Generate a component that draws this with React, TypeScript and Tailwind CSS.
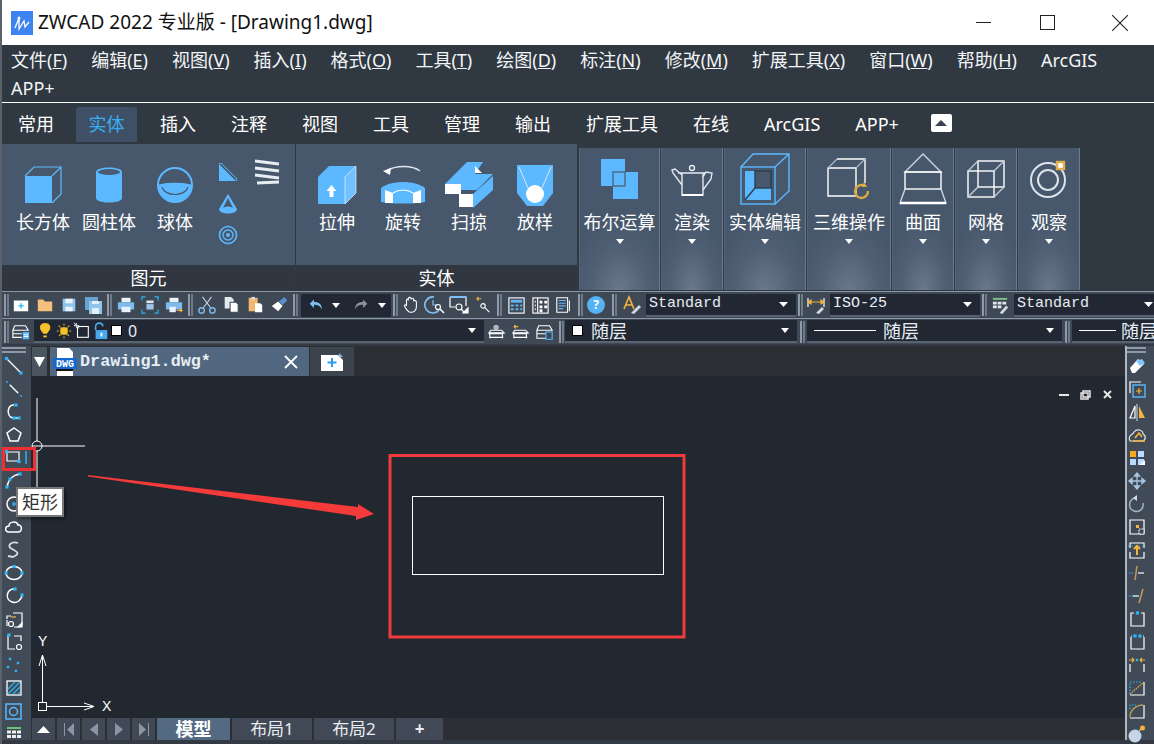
import React from "react";

const CJK = "font-['Noto_Sans','Noto_Sans_CJK_SC',sans-serif]";
const BLUE = "#5cb8ff";
const NODE = "#29b6f6";
const GOLD = "#f5b43c";

const Ic = ({ s = 20, v = 20, children }: { s?: number; v?: number; children: React.ReactNode }) => (
  <svg width={s} height={s} viewBox={`0 0 ${v} ${v}`} fill="none" stroke="#fff" strokeWidth={1.2} className="shrink-0 overflow-visible">
    {children}
  </svg>
);

const N = ({ x, y, r = 1.6 }: { x: number; y: number; r?: number }) => (
  <rect x={x - r} y={y - r} width={r * 2} height={r * 2} fill={NODE} stroke="none" />
);

const Caret = ({ w = 9, h = 5, color = "#fff", up = false }: { w?: number; h?: number; color?: string; up?: boolean }) => (
  <svg width={w} height={h} viewBox="0 0 10 6" className="shrink-0" preserveAspectRatio="none">
    <path d={up ? "M0 6h10L5 0z" : "M0 0h10L5 6z"} fill={color} />
  </svg>
);

const Grip = ({ w = 9 }: { w?: number }) => (
  <div className="flex h-full shrink-0 items-center justify-center gap-[1px]" style={{ width: w }}>
    <div className="h-[22px] w-[2px] bg-[#8e9aa9]" />
    <div className="h-[22px] w-[2px] bg-[#6f7a88]" />
  </div>
);

const Slot = ({ children }: { children: React.ReactNode }) => (
  <div className="flex h-full w-6 shrink-0 items-center justify-center">{children}</div>
);

const Combo = ({ className, children }: { className: string; children: React.ReactNode }) => (
  <div className={`flex h-[23px] shrink-0 items-center border-b-2 border-[#59636f] bg-[#212833] text-[#e8eef5] ${className}`}>
    {children}
  </div>
);

// ---- ribbon icons ----
const BoxIcon = () => (
  <svg width="38" height="38" viewBox="0 0 38 38" fill="none">
    <rect x="1" y="10" width="27" height="27" fill={BLUE} />
    <path d="M1 10 10 1h27v27l-9 9M28 10l9-9" stroke={BLUE} strokeWidth="1.2" />
  </svg>
);
const CylinderIcon = () => (
  <svg width="28" height="38" viewBox="0 0 28 38">
    <path d="M1 6c0-6 26-6 26 0v26c0 6-26 6-26 0z" fill={BLUE} />
    <ellipse cx="14" cy="6" rx="11" ry="3" fill="#4a5a70" />
  </svg>
);
const SphereIcon = () => (
  <svg width="38" height="38" viewBox="0 0 38 38" fill="none">
    <circle cx="19" cy="19" r="17" stroke={BLUE} strokeWidth="2" />
    <path d="M2 19c6-3 28-3 34 0-1 10-9 17-17 17S3 29 2 19z" fill={BLUE} />
    <path d="M6 21c3 10 23 10 26 0" stroke="#48586c" strokeWidth="1.2" />
  </svg>
);
const WedgeIcon = () => (
  <svg width="20" height="20" viewBox="0 0 20 20" fill="none">
    <path d="M1 1v17h17z" fill={BLUE} />
    <path d="M1 1 3 0l16 16-1 2" stroke={BLUE} />
  </svg>
);
const ConeIcon = () => (
  <svg width="20" height="22" viewBox="0 0 20 22" fill="none">
    <path d="M10 1 1 16c0 6 18 6 18 0z" fill={BLUE} />
    <path d="M10 5 5 15c3-2 7-2 10 0z" fill="#48586c" />
  </svg>
);
const TorusIcon = () => (
  <svg width="20" height="20" viewBox="0 0 20 20" fill="none" stroke={BLUE}>
    <circle cx="10" cy="10" r="8.5" strokeWidth="1.6" />
    <circle cx="10" cy="10" r="5" strokeWidth="1.4" />
    <circle cx="10" cy="10" r="2" fill={BLUE} stroke="none" />
  </svg>
);
const CoilIcon = () => (
  <svg width="26" height="26" viewBox="0 0 26 26" fill="none" stroke="#e8edf2" strokeWidth="3">
    <path d="M1 2l24 3M1 9l24 3M1 16l24 3M3 24l22-1" />
  </svg>
);
const ExtrudeIcon = () => (
  <svg width="40" height="40" viewBox="0 0 40 40">
    <path d="M1 12 12 1h27L28 12z" fill={BLUE} />
    <rect x="1" y="12" width="27" height="27" fill={BLUE} />
    <path d="M28 12 39 1v27L28 39z" fill="#6fc2ff" stroke="#fff" strokeWidth="0.6" />
    <path d="M14.500 20l5 6h-3v6h-4v-6h-3z" fill="#fff" />
  </svg>
);
const RevolveIcon = () => (
  <svg width="46" height="42" viewBox="0 0 46 42" fill="none">
    <path d="M6 7c10-6 26-6 34 0" stroke="#dfe6ee" strokeWidth="1.4" />
    <path d="M3 7l8-3-1 7z" fill="#fff" />
    <path d="M1 24c10-8 34-8 44 0v14c-12 2-32 2-44 0z" fill={BLUE} />
    <path d="M5 26l8 3v10H5zM41 26l-8 3v10h8z" fill="#fff" />
    <path d="M13 29c6-4 14-4 20 0" stroke="#fff" strokeWidth="1.2" />
  </svg>
);
const SweepIcon = () => (
  <svg width="48" height="46" viewBox="0 0 48 46">
    <path d="M0 22 22 0h16L30 12h18L32 28H16l-4 4H0z" fill={BLUE} />
    <path d="M30 4v7h7z" fill="#fff" />
    <path d="M0 22h16v10H0zM14 32h14v13H14z" fill="#fff" />
    <path d="M28 32 48 14v14L28 46z" fill={BLUE} />
  </svg>
);
const LoftIcon = () => (
  <svg width="36" height="42" viewBox="0 0 36 42" fill="none">
    <path d="M0 1h36v28L26 42H10L0 29z" fill={BLUE} />
    <circle cx="18" cy="30" r="9" fill="#fff" />
    <path d="M2 3 11 24M34 3 25 24" stroke="#dce6f0" strokeWidth="1" />
  </svg>
);
const BooleanIcon = () => (
  <svg width="37" height="40" viewBox="0 0 37 40">
    <rect x="0" y="0" width="24" height="27" fill={BLUE} />
    <rect x="12" y="13" width="25" height="27" fill={BLUE} />
    <rect x="12" y="13" width="12" height="14" fill={BLUE} stroke="#48586c" strokeWidth="1.2" />
  </svg>
);
const TeapotIcon = () => (
  <svg width="44" height="36" viewBox="0 0 44 36" fill="none" stroke="#e4e9ef" strokeWidth="1.4">
    <path d="M8 12h27M12 12v22h21V12M12 14 5 8 2 9l1 3 9 12M33 16l3-5 6 1-1 6-8 11" />
    <circle cx="22" cy="7" r="2.500" />
    <path d="M12 34h21" strokeWidth="2" stroke="#fff" />
  </svg>
);
const SolidEditIcon = () => (
  <svg width="50" height="52" viewBox="0 0 50 52" fill="none" stroke={BLUE} strokeWidth="1.4">
    <rect x="1" y="14" width="34" height="37" />
    <path d="M1 14 13 1h36v37L35 51M35 14 49 1" />
    <rect x="5" y="18" width="26" height="29" fill={BLUE} stroke="none" />
    <rect x="15" y="18" width="16" height="17" fill="#48586c" stroke="#2b3d52" />
    <path d="M5 47 15 35" stroke="#2b3d52" />
  </svg>
);
const Op3dIcon = () => (
  <svg width="44" height="42" viewBox="0 0 44 42" fill="none" stroke="#fff" strokeWidth="1.4">
    <path d="M1 10h28v28H1zM29 10V9M10 1h28v24" />
    <path d="M1 10l9-9M29 10l9-9" stroke="#aab4c0" />
    <path d="M41 33a6.500 6.500 0 1 1-3-5" stroke="#d9a944" strokeWidth="2.400" />
    <path d="M37 24l3 5-5 0z" fill="#d9a944" stroke="none" />
  </svg>
);
const SurfaceIcon = () => (
  <svg width="48" height="52" viewBox="0 0 48 52" fill="none" stroke="#fff" strokeWidth="1.4">
    <path d="M24 1 6 19h36z" stroke="#d0d7df" />
    <rect x="6" y="19" width="36" height="17" />
    <path d="M6 36 1 50h46l-5-14" stroke="#d0d7df" />
    <path d="M1 50h46" strokeWidth="2.400" />
  </svg>
);
const MeshIcon = () => (
  <svg width="38" height="38" viewBox="0 0 38 38" fill="none" stroke="#fff" strokeWidth="1.4">
    <rect x="1" y="11" width="26" height="26" />
    <rect x="11" y="1" width="26" height="26" />
    <path d="M1 11 11 1M27 11 37 1M27 37l10-10" stroke="#c5ccd5" />
    <path d="M1 37l10-10" stroke="#c5ccd5" />
  </svg>
);
const OrbitIcon = () => (
  <svg width="38" height="40" viewBox="0 0 38 40" fill="none" stroke="#dde3ea">
    <circle cx="18" cy="21" r="17" strokeWidth="2" />
    <circle cx="18" cy="21" r="10" strokeWidth="2" />
    <rect x="27" y="3" width="7" height="7" fill="#fff" stroke="#e0b050" strokeWidth="2.400" />
  </svg>
);

// ---- sidebar icons ----
const leftIcons: React.ReactNode[] = [
  <><path d="M3 3l14 14" /><N x={2.500} y={2.500} /><N x={17} y={17} /></>,
  <><path d="M2 2l16 16" strokeDasharray="2.500 2.500" stroke={NODE} /><path d="M6 6l8 8" /></>,
  <><path d="M10 3C3 2 2 15 9 16h5" strokeWidth="1.500" /><N x={12} y={3} /><N x={10} y={16} /><N x={15} y={16} /></>,
  <path d="M10 3l7 5-3 8H6L3 8z" strokeWidth="1.500" />,
  <><path d="M4 4h11v9H3V5" /><N x={2.500} y={3.500} /><N x={15} y={13.500} /><path d="M22 3v13" stroke={NODE} strokeWidth="1.500" /></>,
  <><path d="M3 16C4 9 9 4 16 3" strokeWidth="1.500" /><N x={3} y={16} /><N x={6} y={8} /><N x={16} y={3} /></>,
  <><circle cx="10" cy="10" r="7" strokeWidth="1.500" /><N x={10} y={10} /></>,
  <path d="M5 15c-5 0-4-6 0-6 0-5 8-5 9-1 4-1 5 7 0 7z" strokeWidth="1.500" />,
  <path d="M14 3C7 1 2 6 8 9s8 5 1 8l-5-1" strokeWidth="1.800" stroke="#d7dee6" />,
  <><ellipse cx="10" cy="10" rx="8" ry="6.500" strokeWidth="1.500" /><N x={10} y={3.500} /><N x={2} y={10} /><N x={18} y={10} /></>,
  <><path d="M11 3C3 2 0 13 8 16c5 2 9-2 10-6" strokeWidth="1.500" /><N x={11} y={3} /><N x={18} y={9} /></>,
  <><path d="M9 4h9v12l-3 2H10M3 10V7h4M3 11v6" /><path d="M7 8h5" stroke={GOLD} /><circle cx="7" cy="15" r="2.500" /><path d="M14 18l4-4v4z" fill="#fff" /></>,
  <><path d="M10 4h7v5M4 3v14h7" /><N x={5} y={3} /><circle cx="15" cy="15" r="2.500" /></>,
  <><N x={6} y={4} r={1.200} /><N x={14} y={8} r={1.200} /><N x={4} y={12} r={1.200} /><N x={12} y={16} r={1.200} /></>,
  <><rect x="3" y="3" width="14" height="14" strokeWidth="1.300" /><path d="M4 11l7-7M4 16l12-12M9 16l7-7M14 16l2-2" stroke={NODE} /></>,
  <><rect x="2" y="3" width="15" height="15" stroke={BLUE} strokeWidth="1.500" /><circle cx="9.500" cy="10.500" r="4" stroke={BLUE} strokeWidth="1.500" /></>,
  <><path d="M3 3h14v2H3z" fill="#6cbf7b" stroke="none" /><path d="M3 6.500h4v3H3zM8 6.500h4v3H8zM13 6.500h4v3h-4zM3 11h4v3H3zM8 11h4v3H8zM13 11h4v3h-4z" fill="#eee" stroke="none" /></>,
];

const rightIcons: React.ReactNode[] = [
  <><path d="M3 12l8-9 6 5-9 9H5z" fill="#fff" stroke="none" /><path d="M9 5l6-2 3 4-5 3z" fill="#7ec8ff" stroke="none" /></>,
  <><path d="M3 14V3h11" /><rect x="6" y="6" width="12" height="12" stroke={BLUE} strokeWidth="1.400" /><path d="M12 9v6M9 12h6" stroke={GOLD} /></>,
  <><path d="M10 2v17" stroke="#bcc6d2" /><path d="M8 4 3 16h5z" /><path d="M12 4l6 12h-6z" fill={GOLD} stroke="none" /></>,
  <><path d="M3 16c-3-6 3-6 4-9 3-4 9-2 9 2 4 2 2 7-1 7z" stroke="#dfe5ec" /><path d="M6 16h12M8 13l4-5 3 4" stroke={GOLD} strokeWidth="1.600" /></>,
  <><rect x="3" y="3" width="6" height="6" fill="#f7a81b" stroke="none" /><rect x="11" y="3" width="6" height="6" fill="#b8dcff" stroke="none" /><rect x="3" y="11" width="6" height="6" fill="#b8dcff" stroke="none" /><rect x="11" y="11" width="6" height="6" fill="#b8dcff" stroke="none" /><path d="M13 17l5-5v5z" fill="#fff" stroke="none" /></>,
  <path d="M10 2v16M2 10h16M10 2 7.500 5h5zM10 18l-2.500-3h5zM2 10l3-2.500v5zM18 10l-3-2.500v5z" stroke="#a9c6e2" strokeWidth="1.300" />,
  <><path d="M8 4C1 6 1 15 7 17c6 2 10-3 9-8" stroke="#9fb2c6" strokeWidth="1.500" /><path d="M10 1 6 4l4 3z" fill="#d4dde7" stroke="none" /></>,
  <><path d="M3 3h14v14H3z" /><rect x="9" y="8" width="3" height="3" fill={GOLD} stroke="none" /><rect x="12" y="12" width="5" height="5" fill="#3f4955" stroke="#fff" strokeDasharray="1.500 1" /></>,
  <><path d="M3 8V3h14v5M3 12v6h14v-6" /><path d="M1 6h18" stroke={NODE} strokeDasharray="1.500 2" /><path d="M10 15V7M7 9l3-3 3 3" stroke={GOLD} strokeWidth="2" /></>,
  <><path d="M2 10h5" stroke={NODE} strokeDasharray="1.500 1" /><path d="M11 10h6" /><path d="M10 3 8 17" stroke="#b89a55" strokeWidth="1.600" /></>,
  <><path d="M2 10h4" stroke={NODE} strokeDasharray="1.500 1" /><path d="M6 10h6" /><path d="M16 3l-4 14" stroke="#b89a55" strokeWidth="1.600" /></>,
  <><path d="M7 4H4v13h13V4h-3" /><N x={10.500} y={4} /></>,
  <><path d="M4 5v12h13V5" /><path d="M4 4h1M16 4h1" /><N x={8} y={4} /><N x={13} y={4} /></>,
  <><path d="M3 9v8M17 9v8" /><path d="M2 5h5M7 5 5 3M7 5 5 7M18 5h-5M13 5l2-2M13 5l2 2" stroke={GOLD} /><N x={10} y={5} r={1.200} /></>,
  <><path d="M3 17h14V4" /><path d="M3 16 17 4" stroke={GOLD} strokeDasharray="1.500 1" /><path d="M3 16V4h11" stroke={NODE} strokeDasharray="1.500 1.500" /></>,
  <><path d="M3 17h14V4" /><path d="M3 16C3 9 9 4 16 4" stroke="#b89a55" strokeWidth="1.400" /><path d="M3 8V4h6" stroke={NODE} strokeDasharray="1.500 1.500" /></>,
  <><circle cx="8" cy="12" r="6.500" fill="#c5d4e6" stroke="none" /><path d="M12 7l2-2" stroke="#bbb" /><circle cx="15.500" cy="4" r="2.500" fill={GOLD} stroke="none" /></>,
];

const Sidebar = ({ icons, className }: { icons: React.ReactNode[]; className: string }) => (
  <div className={`flex h-full w-[29px] shrink-0 flex-col bg-[#414b57] ${className}`}>
    <div className="mt-[1px] mb-[3px] flex w-full flex-col gap-[2px]">
      <div className="h-[2px] bg-[#8e9aa9]" />
      <div className="h-[2px] bg-[#8e9aa9]" />
    </div>
    <div className="flex flex-col items-center gap-[3px]">
      {icons.map((icon, i) => (
        <Ic key={i}>{icon}</Ic>
      ))}
    </div>
  </div>
);

const menu: [string, string, string][] = [
  ["文件(", "F", ")"],
  ["编辑(", "E", ")"],
  ["视图(", "V", ")"],
  ["插入(", "I", ")"],
  ["格式(", "O", ")"],
  ["工具(", "T", ")"],
  ["绘图(", "D", ")"],
  ["标注(", "N", ")"],
  ["修改(", "M", ")"],
  ["扩展工具(", "X", ")"],
  ["窗口(", "W", ")"],
  ["帮助(", "H", ")"],
];

const tabs = ["插入", "注释", "视图", "工具", "管理", "输出", "扩展工具", "在线", "ArcGIS", "APP+"];

const RibbonBtn = ({ label, children }: { label: string; children: React.ReactNode }) => (
  <div className="flex w-[66px] shrink-0 flex-col items-center">
    <div className="flex h-[46px] items-center">{children}</div>
    <div className="mt-[1px] whitespace-nowrap text-[18px] leading-[26px] text-white">{label}</div>
  </div>
);

const DropPanel = ({ w, label, children }: { w: number; label: string; children: React.ReactNode }) => (
  <div
    className="mr-[1px] flex h-[142px] shrink-0 flex-col items-center bg-[radial-gradient(ellipse_60%_50%_at_50%_100%,#6b788a_0%,#505f73_60%,#48586c_100%)] pt-[4px] shadow-[inset_1px_0_0_#55647a,inset_-1px_0_0_#6d7b8f]"
    style={{ width: w }}
  >
    <div className="flex h-[54px] items-center">{children}</div>
    <div className="mt-[3px] whitespace-nowrap text-[18px] leading-[26px] text-white">{label}</div>
    <div className="mt-[4px]">
      <Caret w={8} h={5} />
    </div>
  </div>
);

export default function App() {
  return (
    <div className={`relative flex h-[744px] w-[1154px] flex-col overflow-hidden border-l-2 border-[#59616b] bg-[#333a44] ${CJK}`}>
      {/* title bar */}
      <div className="flex h-[45px] shrink-0 items-center bg-white pl-[9px] text-[#111]">
        <svg width="22" height="24" viewBox="0 0 22 24" className="shrink-0">
          <rect width="22" height="24" fill="#3d84f0" />
          <path d="M4 17 8 7v11l5-8 1 6 4-5" fill="none" stroke="#fff" strokeWidth="1.300" />
          <circle cx="8" cy="7" r="1.500" fill="#fff" />
        </svg>
        <span className="ml-[5px] text-[19px] leading-none">ZWCAD 2022 专业版 - [Drawing1.dwg]</span>
        <div className="ml-auto flex items-center pr-[26px]">
          <div className="h-[1px] w-[15px] bg-[#222]" />
          <div className="ml-[49px] h-[15px] w-[15px] border border-[#222]" />
          <svg width="16" height="16" viewBox="0 0 16 16" className="ml-[57px]" stroke="#222" strokeWidth="1.100">
            <path d="M0 0l16 16M16 0 0 16" />
          </svg>
        </div>
      </div>

      {/* menu bar */}
      <div className="flex h-[58px] shrink-0 flex-wrap content-start gap-x-[24px] border-b border-white bg-[#303841] pl-[9px] pr-[4px] pt-[1px] text-[18px] leading-[28px] text-[#f2f5f8]">
        {menu.map(([a, k, b]) => (
          <span key={a} className="whitespace-nowrap">
            {a}
            <span className="underline">{k}</span>
            {b}
          </span>
        ))}
        <span>ArcGIS</span>
        <span className="w-full">APP+</span>
      </div>

      {/* ribbon tabs */}
      <div className="flex h-[41px] shrink-0 items-center bg-[#303841] pl-[16px] pt-[1px] text-[18px] text-white">
        <span>常用</span>
        <div className="ml-[22px] flex h-[35px] w-[61px] items-center justify-center rounded-t-[3px] bg-[#3f5066] text-[#38aef0]">实体</div>
        <div className="ml-[23px] flex items-center gap-x-[35px]">
          {tabs.map((t) => (
            <span key={t}>{t}</span>
          ))}
          <div className="-ml-[3px] -mt-[3px] flex h-[18px] w-[21px] items-center justify-center rounded-[2px] bg-white">
            <Caret w={12} h={6} color="#39424e" up />
          </div>
        </div>
      </div>

      {/* ribbon panels */}
      <div className="flex h-[147px] shrink-0 items-start bg-[#303841]">
        <div className="mr-[1px] flex h-[146px] w-[293px] shrink-0 flex-col bg-[#48586c]">
          <div className="flex flex-1 pl-[8px] pt-[18px]">
            <RibbonBtn label="长方体"><BoxIcon /></RibbonBtn>
            <RibbonBtn label="圆柱体"><CylinderIcon /></RibbonBtn>
            <RibbonBtn label="球体"><SphereIcon /></RibbonBtn>
            <div className="ml-[10px] flex w-[20px] flex-col items-center gap-[10px] pt-[1px]">
              <WedgeIcon />
              <ConeIcon />
              <TorusIcon />
            </div>
            <div className="ml-[16px] -mt-[3px]">
              <CoilIcon />
            </div>
          </div>
          <div className="h-[25px] bg-[#303741] text-center text-[18px] leading-[26px] text-white">图元</div>
        </div>
        <div className="mr-[1px] flex h-[146px] w-[281px] shrink-0 flex-col bg-[#48586c]">
          <div className="flex flex-1 pl-[8px] pt-[18px]">
            <RibbonBtn label="拉伸"><ExtrudeIcon /></RibbonBtn>
            <RibbonBtn label="旋转"><RevolveIcon /></RibbonBtn>
            <RibbonBtn label="扫掠"><SweepIcon /></RibbonBtn>
            <RibbonBtn label="放样"><LoftIcon /></RibbonBtn>
          </div>
          <div className="h-[25px] bg-[#303741] text-center text-[18px] leading-[26px] text-white">实体</div>
        </div>
        <div className="mt-[4px] flex pl-[1px]">
          <DropPanel w={81} label="布尔运算"><BooleanIcon /></DropPanel>
          <DropPanel w={62} label="渲染"><TeapotIcon /></DropPanel>
          <DropPanel w={82} label="实体编辑"><SolidEditIcon /></DropPanel>
          <DropPanel w={84} label="三维操作"><Op3dIcon /></DropPanel>
          <DropPanel w={62} label="曲面"><SurfaceIcon /></DropPanel>
          <DropPanel w={62} label="网格"><MeshIcon /></DropPanel>
          <DropPanel w={62} label="观察"><OrbitIcon /></DropPanel>
        </div>
      </div>

      {/* standard toolbar */}
      <div className="flex h-[27px] shrink-0 items-center border-t border-[#8b97a6] bg-[#3f4955] pl-[1px]">
        <Grip w={6} />
        <Slot><Ic s={18}><path d="M2 5h16v12H2z" fill="#fff" stroke="none" /><path d="M10 8v6M7 11h6" stroke={NODE} strokeWidth="1.500" /></Ic></Slot>
        <Slot><Ic s={18}><path d="M2 4h6l2 2h8v11H2z" fill="#f6bf7b" stroke="none" /></Ic></Slot>
        <Slot><Ic s={18}><path d="M3 3h14v14H3z" fill="#90c6ee" stroke="none" /><path d="M6 3h8v5H6zM6 12h8v5H6z" fill="#eaf3fb" stroke="none" /></Ic></Slot>
        <Slot><Ic s={20}><path d="M2 2h13v13H2z" fill="#6aa3cf" stroke="none" /><path d="M6 6h13v13H6z" fill="#90c6ee" stroke="none" /><path d="M9 13h7v6H9zM9 6h7v3H9z" fill="#e4eef7" stroke="none" /></Ic></Slot>
        <Grip w={9} />
        <Slot><Ic s={18}><path d="M5 2h10v5H5z" fill="#e8f2fb" stroke="none" /><path d="M1 7h18v8H1z" fill="#7dbcec" stroke="none" /><path d="M5 12h10v6H5z" fill="#e8f2fb" stroke="none" /></Ic></Slot>
        <Slot><Ic s={18}><path d="M1 5V1h4M15 1h4v4M19 15v4h-4M5 19H1v-4" stroke={NODE} /><path d="M6 5h8v3H6z" fill="#d9e6f2" stroke="none" /><path d="M6 9h8v6H6z" fill="#9fc6e6" stroke="none" /></Ic></Slot>
        <Slot><Ic s={18}><path d="M5 2h10v5H5z" fill="#e8f2fb" stroke="none" /><path d="M1 7h18v8H1z" fill="#7dbcec" stroke="none" /><path d="M5 12h7v6H5z" fill="#e8f2fb" stroke="none" /><path d="M13 16h6M17 14l2 2-2 2" stroke={GOLD} /></Ic></Slot>
        <Grip w={9} />
        <Slot><Ic s={18}><path d="M5 1l9 12M15 1 6 13" stroke="#c8d4e0" /><circle cx="4" cy="16" r="3" stroke="#7dbcec" strokeWidth="1.500" /><circle cx="16" cy="16" r="3" stroke="#7dbcec" strokeWidth="1.500" /></Ic></Slot>
        <Slot><Ic s={18}><path d="M3 1h7l3 3v10H3z" fill="#e4e9ef" stroke="none" /><path d="M9 7h7l2 2v9H9z" fill="#fff" stroke="#3f4955" /></Ic></Slot>
        <Slot><Ic s={18}><path d="M3 2h10v15H3z" fill="#f2b66e" stroke="none" /><path d="M6 1h4v3H6z" fill="#d7dce2" stroke="none" /><path d="M10 8h6l2 2v8h-8z" fill="#fff" stroke="none" /></Ic></Slot>
        <Slot><Ic s={18}><path d="M9 6l5 5-5 6-7-6z" fill="#fff" stroke="none" /><path d="M10 6l6-5 3 4-5 5z" fill="#5d8fd0" stroke="none" /></Ic></Slot>
        <Grip w={9} />
        <div className="ml-[1px] flex h-[23px] w-[90px] shrink-0 items-center bg-[#212833] pl-[7px]">
          <Ic s={17}><path d="M7 3 2 8l5 5V9c4 0 8 1 9 6 1-6-3-9-9-9z" fill="#7ec0f5" stroke="none" /></Ic>
          <div className="ml-[7px]"><Caret w={8} h={5} /></div>
          <div className="ml-[12px]"><Ic s={17}><path d="M13 3l5 5-5 5V9c-4 0-8 1-9 6-1-6 3-9 9-9z" fill="#8b929b" stroke="none" /></Ic></div>
          <div className="ml-[9px]"><Caret w={8} h={5} /></div>
        </div>
        <Grip w={8} />
        <Slot><Ic s={18}><path d="M5 9V5c0-2 2-2 2 0V3c0-2 3-2 3 0v1c0-2 3-2 3 0v2c0-2 3-1 3 1v5c0 3-2 6-5 6H9c-2 0-3-2-6-6-1-2 1-3 2-1z" strokeWidth="1.200" /></Ic></Slot>
        <Slot><Ic s={20}><path d="M9 2a8 8 0 1 0 5 13" stroke="#7ec0f5" strokeWidth="1.600" /><path d="M8 5v5h4" stroke="#7ec0f5" /><circle cx="13" cy="12" r="2.500" /><path d="M15 14l4 4" strokeWidth="1.600" /></Ic></Slot>
        <Slot><Ic s={20}><path d="M1 2h16v9M1 2v10h5" /><path d="M1 2h16" stroke="#7ec0f5" strokeWidth="2" /><circle cx="10" cy="12" r="3" /><path d="M12 14l3 3" /><path d="M14 18l5-5v5z" fill="#fff" /></Ic></Slot>
        <Slot><Ic s={18}><path d="M3 3h5M3 3l2-2M3 3l2 2" stroke={GOLD} /><circle cx="10" cy="11" r="2.500" /><path d="M12 13l5 5" /></Ic></Slot>
        <Grip w={9} />
        <Slot><Ic s={19}><rect x="2" y="2" width="16" height="16" /><path d="M4 4h12v3H4z" fill="#62b6f2" stroke="none" /><path d="M4 9h3v2H4zM9 9h3v2H9zM14 9h2v2h-2zM4 13h3v2H4zM9 13h3v2H9zM14 13h2v2h-2z" fill="#62b6f2" stroke="none" /></Ic></Slot>
        <Slot><Ic s={19}><rect x="2" y="2" width="16" height="16" /><path d="M7 2v16" /><path d="M4 5h1v2H4zM4 9h1v2H4zM4 13h1v2H4zM9 5h3v3H9zM14 5h3v3h-3zM9 10h3v3H9zM14 10h3v3h-3zM9 14h3v3H9z" fill="#fff" stroke="none" /></Ic></Slot>
        <Slot><Ic s={18}><path d="M2 2h12v16H2z" /><path d="M4 5h8M4 8h8M4 11h8M4 14h5" stroke="#62b6f2" /><path d="M16 5v12" /></Ic></Slot>
        <Grip w={8} />
        <Slot>
          <div className="flex h-[18px] w-[18px] items-center justify-center rounded-full bg-[#55b2f3] text-[12px] font-bold leading-none text-white">?</div>
        </Slot>
        <Grip w={12} />
        <Slot><Ic s={20}><path d="M2 14 7 2l5 12M4 10h6" stroke={GOLD} strokeWidth="1.600" /><path d="M9 18l8-8 2 2-7 7z" fill="#cfd9e4" stroke="none" /></Ic></Slot>
        <Combo className="ml-[2px] w-[150px] pl-[3px] pr-[8px] font-['Liberation_Mono',monospace] text-[15px]">
          <span className="pt-[1px]">Standard</span>
          <span className="ml-auto"><Caret w={9} h={5} /></span>
        </Combo>
        <Grip w={8} />
        <Slot><Ic s={20}><path d="M2 3v9M18 3v9" /><path d="M2 7h16M2 7l3-2v4zM18 7l-3-2v4z" stroke={GOLD} /><path d="M10 18l6-6 2 2-5 5z" fill="#cfd9e4" stroke="none" /></Ic></Slot>
        <Combo className="ml-[2px] w-[150px] pl-[3px] pr-[8px] font-['Liberation_Mono',monospace] text-[15px]">
          <span className="pt-[1px]">ISO-25</span>
          <span className="ml-auto"><Caret w={9} h={5} /></span>
        </Combo>
        <Grip w={8} />
        <Slot><Ic s={19}><path d="M2 2h15v2H2z" fill="#7bc58a" stroke="none" /><path d="M2 6h4v3H2zM7 6h4v3H7zM12 6h4v3h-4zM2 10h4v3H2zM7 10h4v3H7z" fill="#dfe5ea" stroke="none" /><path d="M9 18l7-8 2 2-6 7z" fill="#cfd9e4" stroke="none" /></Ic></Slot>
        <Combo className="ml-[2px] w-[160px] pl-[3px] font-['Liberation_Mono',monospace] text-[15px]">
          <span className="pt-[1px]">Standard</span>
          <span className="ml-[55px]"><Caret w={9} h={5} /></span>
        </Combo>
      </div>

      {/* layer toolbar */}
      <div className="flex h-[26px] shrink-0 items-center border-t border-[#8b97a6] bg-[#3f4955] pl-[1px]">
        <Grip w={6} />
        <Slot><Ic s={18}><path d="M3 3h12l3 5H1zM1 8v4h10M1 12v4h10" /><path d="M12 10h7v8h-7z" fill={BLUE} stroke="none" /><path d="M13 13h5M13 15h5" stroke="#fff" /></Ic></Slot>
        <Combo className="ml-[1px] w-[450px] pl-[3px] pr-[8px] text-[15px]">
          <Ic s={18}><path d="M9 1c5 0 7 4 5 8l-3 4H7L4 9C2 5 4 1 9 1z" fill="#f6c02c" stroke="none" /><path d="M7 15h4v2H7z" fill="#f6c02c" stroke="none" /></Ic>
          <Ic s={18}><rect x="6" y="6" width="8" height="8" fill="#f6c02c" stroke="none" /><path d="M10 2v16M2 10h16M4 4l12 12M16 4 4 16" stroke="#f6c02c" strokeDasharray="2 1.500" /></Ic>
          <Ic s={18}><rect x="5" y="5" width="12" height="12" /><path d="M1 1l6 6M4 1v6M1 4h6" stroke="#c5ccd5" /></Ic>
          <div className="ml-[1px]"><Ic s={18}><path d="M4 9V5c0-5 8-5 8 0" stroke="#4aa8f0" strokeWidth="1.800" /><rect x="4" y="9" width="13" height="10" fill="#4aa8f0" stroke="none" /><path d="M10.500 12v4" stroke="#fff" strokeWidth="2" /></Ic></div>
          <div className="ml-[1px] h-[11px] w-[11px] border border-black bg-white" />
          <span className="ml-[6px] text-[16px]">0</span>
          <span className="ml-auto"><Caret w={8} h={5} /></span>
        </Combo>
        <div className="ml-[1px]" />
        <Slot><Ic s={18}><path d="M3 8h12l3 3H1zM1 12h16M2 16h15M2 11v6M16 11v6" /><circle cx="9" cy="5" r="3" fill="#aeb7c2" stroke="none" /></Ic></Slot>
        <Slot><Ic s={18}><path d="M3 8h12l3 3H1zM1 12h16M2 16h15M2 11v6M16 11v6" /><path d="M2 4h5M2 4l2-2M2 4l2 2" stroke={GOLD} /></Ic></Slot>
        <Slot><Ic s={18}><path d="M3 3h12l3 5H1zM1 8v9h10M1 12h10" /><path d="M11 10h7v8h-7z" stroke={BLUE} /></Ic></Slot>
        <Grip w={8} />
        <Combo className="w-[232px] pl-[7px] pr-[8px] text-[18px]">
          <div className="h-[11px] w-[11px] border border-black bg-white" />
          <span className="ml-[8px] leading-none">随层</span>
          <span className="ml-auto"><Caret w={8} h={5} /></span>
        </Combo>
        <Grip w={10} />
        <Combo className="w-[255px] pl-[7px] pr-[8px] text-[18px]">
          <div className="h-[1px] w-[62px] bg-white" />
          <span className="ml-[7px] leading-none">随层</span>
          <span className="ml-auto"><Caret w={8} h={5} /></span>
        </Combo>
        <Grip w={10} />
        <Combo className="w-[90px] overflow-hidden pl-[7px] text-[18px]">
          <div className="h-[1px] w-[37px] shrink-0 bg-white" />
          <span className="ml-[5px] whitespace-nowrap leading-none">随层</span>
        </Combo>
      </div>

      <div className="h-[2px] shrink-0" />

      {/* workspace */}
      <div className="flex h-[394px] shrink-0 bg-[#2b2e32]">
        <Sidebar icons={leftIcons} className="pr-[5px]" />
        <div className="flex min-w-0 flex-1 flex-col">
          <div className="flex h-[30px] shrink-0 items-stretch pl-[1px] pt-[1px]">
            <div className="flex w-[15px] items-center justify-center bg-[#4a5560]">
              <Caret w={11} h={10} />
            </div>
            <div className="ml-[3px] flex w-[259px] items-center bg-[#51677f] pl-[3px] pr-[11px] text-white">
              <svg width="24" height="28" viewBox="0 0 24 28" className="shrink-0">
                <path d="M4 0h12l4 4v24H4z" fill="#fff" />
                <rect x="0" y="10" width="24" height="11" fill="#1668d0" />
                <rect x="3" y="21" width="17" height="2" fill="#111" />
                <text x="12" y="19" fontSize="10" textAnchor="middle" fill="#fff" fontFamily="Liberation Mono" fontWeight="700">DWG</text>
              </svg>
              <span className="ml-[3px] mt-[2px] font-['Liberation_Mono',monospace] text-[16.8px] font-bold leading-none text-[#e6edf4]">Drawing1.dwg*</span>
              <svg width="14" height="14" viewBox="0 0 14 14" className="ml-auto" stroke="#fff" strokeWidth="1.800">
                <path d="M1 1l12 12M13 1 1 13" />
              </svg>
            </div>
            <div className="ml-[1px] flex w-[44px] items-center justify-center bg-[#3c444e]">
              <svg width="22" height="18" viewBox="0 0 22 18">
                <path d="M0 2h17l5 5v11H0z" fill="#fff" />
                <path d="M18 0l4 4h-4z" fill="#7ec0f5" />
                <path d="M11 5v9M6.500 9.500h9" stroke="#2a9df0" strokeWidth="2" />
              </svg>
            </div>
          </div>

          {/* drawing area */}
          <div className="min-h-0 flex-1 bg-[#212830]" />

          <div className="flex h-[22px] shrink-0 gap-[2px] bg-[#2b2e32] pl-[1px] text-[17px] text-[#e8ecf1]">
            <div className="flex w-[23px] items-center justify-center bg-[#404955]"><Caret w={13} h={7} up /></div>
            <div className="flex w-[23px] items-center justify-center bg-[#404955]"><svg width="10" height="13" viewBox="0 0 10 13"><path d="M0 0h1v13H0zM10 0v13L3 6.500z" fill="#8c96a3" /></svg></div>
            <div className="flex w-[23px] items-center justify-center bg-[#404955]"><svg width="8" height="13" viewBox="0 0 8 13"><path d="M8 0v13L0 6.500z" fill="#8c96a3" /></svg></div>
            <div className="flex w-[23px] items-center justify-center bg-[#404955]"><svg width="8" height="13" viewBox="0 0 8 13"><path d="M0 0v13l8-6.500z" fill="#8c96a3" /></svg></div>
            <div className="flex w-[23px] items-center justify-center bg-[#404955]"><svg width="10" height="13" viewBox="0 0 10 13"><path d="M0 0v13l7-6.500zM9 0h1v13H9z" fill="#8c96a3" /></svg></div>
            <div className="flex w-[73px] items-center justify-center bg-[#546a83] text-[18px] font-bold text-white">模型</div>
            <div className="flex w-[80px] items-center justify-center bg-[#404955]">布局1</div>
            <div className="flex w-[80px] items-center justify-center bg-[#404955]">布局2</div>
            <div className="flex w-[47px] items-center justify-center bg-[#404955] font-bold">+</div>
          </div>
        </div>
        <Sidebar icons={rightIcons} className="border-l-2 border-l-[#aeb7c2] pr-[8px]" />
      </div>

      {/* things drawn on the model space, in window coordinates */}
      <svg className="pointer-events-none absolute -left-[2px] top-0" width="1154" height="744" viewBox="0 0 1154 744" fill="none">
        <path d="M37 398v43M37 451v37M32 446h53" stroke="#fff" />
        <circle cx="37" cy="446" r="5" stroke="#fff" />
        <rect x="3.500" y="448.500" width="31" height="21" stroke="#ee2f33" strokeWidth="3" />
        <path d="M88 475 358 507V504L374 514 356 520V516L88 476.500z" fill="#f53a3a" />
        <rect x="390" y="455.500" width="294" height="181.500" stroke="#f03a3c" strokeWidth="3" />
        <rect x="412.500" y="496.500" width="251" height="78" stroke="#fff" />
        <rect x="38.500" y="702.500" width="8" height="8" stroke="#fff" />
        <path d="M42.500 702v-47M39 666l3.500-11 3.500 11M47 706.500h46M84 703l10 3.500-10 3.500" stroke="#fff" />
        <path d="M1059 395h10" stroke="#e6e6e6" strokeWidth="2" />
        <path d="M1083 391h7v6h-7z M1081 393h7v6h-7z" stroke="#e6e6e6" strokeWidth="1.500" />
        <path d="M1104 391l7 7M1111 391l-7 7" stroke="#e6e6e6" strokeWidth="2" />
      </svg>
      <span className="absolute left-[36px] top-[634px] font-['Liberation_Sans',sans-serif] text-[14px] leading-none text-white">Y</span>
      <span className="absolute left-[100px] top-[699px] font-['Liberation_Sans',sans-serif] text-[14px] leading-none text-white">X</span>

      {/* tooltip */}
      <div className="absolute left-[14px] top-[487px] flex h-[30px] w-[48px] items-center justify-center border-2 border-[#777] bg-white text-[18px] leading-none text-[#333] shadow-[2px_2px_3px_rgba(0,0,0,0.4)]">
        矩形
      </div>
    </div>
  );
}
